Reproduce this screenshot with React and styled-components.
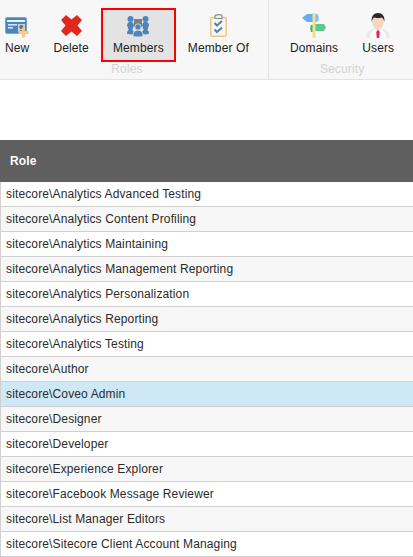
import React from "react";
import styled, { createGlobalStyle } from "styled-components";

const GlobalStyle = createGlobalStyle`
  html, body {
    margin: 0;
    padding: 0;
    overflow: hidden;
    background: #fff;
    font-family: "Liberation Sans", Arial, sans-serif;
    letter-spacing: 0.13px;
  }
`;

const Ribbon = styled.div`
  display: flex;
  height: 79px;
  margin-bottom: 60px;
  background: #f7f7f7;
  border-bottom: 1px solid #e3e3e3;
  overflow: hidden;
`;

const Chunk = styled.div`
  display: flex;
  flex: none;
  flex-direction: column;
  margin-left: ${(props) => props.$offset || 0}px;
  padding: 8px ${(props) => props.$right}px 0 ${(props) => props.$left}px;
  border-right: ${(props) => (props.$divider ? "1px solid #e3e3e3" : "none")};
`;

const Buttons = styled.div`
  display: flex;
`;

const RibbonButton = styled.div`
  display: flex;
  flex-direction: column;
  align-items: center;
  box-sizing: border-box;
  height: 54px;
  padding: ${(props) => (props.$active ? "3px 10px 0" : "5px 12px 0")};
  background: ${(props) => (props.$active ? "#e3e3e3" : "transparent")};
  border: ${(props) => (props.$active ? "2px solid #f00" : "none")};
  color: #222;
  font-size: 12px;
`;

const IconSlot = styled.div`
  display: flex;
  align-items: center;
  justify-content: center;
  height: 24px;
  margin-bottom: 4px;
`;

const ChunkLabel = styled.div`
  height: 14px;
  line-height: 14px;
  text-align: center;
  color: #d2d2d2;
  font-size: 12px;
`;

const Table = styled.table`
  width: 413px;
  border-collapse: separate;
  border-spacing: 0;
  table-layout: fixed;
  font-size: 12px;
`;

const Th = styled.th`
  box-sizing: border-box;
  height: 42px;
  padding: 0 0 0 10px;
  background: #5f5f5f;
  color: #fff;
  font-weight: bold;
  text-align: left;
`;

const Row = styled.tr`
  background: ${(props) =>
    props.$selected ? "#cfe8f5" : props.$odd ? "#f7f7f7" : "#fff"};
`;

const Td = styled.td`
  box-sizing: border-box;
  height: 25px;
  padding: 0 0 0 5px;
  border-left: 1px solid #d0d0d0;
  border-bottom: 1px solid #d0d0d0;
  color: #2b2b2b;
`;

const NewIcon = () => (
  <svg width="24" height="25" viewBox="0 -4 24 25">
    <rect x="0.5" y="0.5" width="21" height="16" rx="1.5" fill="#4a86bd" stroke="#7ba7cf" />
    <rect x="2" y="3" width="18" height="2" fill="#e8f1f8" />
    <rect x="3" y="7" width="9" height="1.6" fill="#d5e4f1" />
    <rect x="3" y="10" width="5" height="1.6" fill="#d5e4f1" />
    <rect x="13" y="7" width="7" height="8" fill="#c9d3da" />
    <circle cx="16.3" cy="10" r="2" fill="#6b6b6b" />
    <path d="M13.5 15c.4-2.2 5.2-2.2 5.6 0z" fill="#6b6b6b" />
    <path d="M17 10.5h3v3.5h3.5v3H20v3.5h-3V17h-3.5v-3H17z" fill="#f2c98b" />
  </svg>
);

const DeleteIcon = () => (
  <svg width="21" height="21" viewBox="0 0 21 21">
    <path d="M5 0l5.500 4.500L16 0l5 5-4.500 5.500L21 16l-5 5-5.500-4.500L5 21l-5-5 4.500-5.500L0 5z" fill="#e2281c" />
  </svg>
);

const MembersIcon = () => (
  <svg width="22" height="23" viewBox="0 -2 22 23" fill="#4f83bd">
    <rect x="7" y="3" width="8" height="8" fill="#7d7d7d" />
    <circle cx="3.500" cy="3" r="3" />
    <circle cx="18.500" cy="3" r="3" />
    <path d="M0 10c0-3 1.500-4.300 3.500-4.300S7 7 7 10c0 1.200-7 1.200-7 0zM15 10c0-3 1.500-4.300 3.500-4.300S22 7 22 10c0 1.200-7 1.200-7 0z" />
    <circle cx="3.500" cy="11.500" r="2.700" />
    <circle cx="18.500" cy="11.500" r="2.700" />
    <path d="M0 17.500c0-3 1.500-4 3.500-4S7 14.500 7 17.500c0 1.200-7 1.200-7 0zM15 17.500c0-3 1.500-4 3.500-4s3.500 1 3.500 4c0 1.200-7 1.200-7 0z" />
    <circle cx="11" cy="11" r="3.200" stroke="#e3e3e3" strokeWidth="0.800" />
    <path d="M6 20c0-4 2.200-5.800 5-5.800s5 1.800 5 5.800c0 1.300-10 1.300-10 0z" stroke="#e3e3e3" strokeWidth="0.800" />
  </svg>
);

const MemberOfIcon = () => (
  <svg width="17" height="23" viewBox="0 0 17 23">
    <rect x="0.800" y="3.500" width="15.400" height="18.700" rx="1" fill="#fbf6ea" stroke="#e6c88f" strokeWidth="1.500" />
    <path d="M5 4.500V2.500C5 1.300 6 .7 8.500.7s3.500.6 3.500 1.800v2z" fill="#f1f1f1" stroke="#8b8b8b" strokeWidth="1.200" />
    <path d="M4.500 9l2.500 2.500 5-4.500M4.500 15.500L7 18l5-4.500" fill="none" stroke="#4f83bd" strokeWidth="2" />
  </svg>
);

const DomainsIcon = () => (
  <svg width="24" height="25" viewBox="0 0 24 25">
    <path d="M0 5l5-4h6v8H5z" fill="#66aef0" />
    <path d="M13 1h2.500c1 1 1.500 3 1 7L13 9.500z" fill="#66aef0" opacity="0.800" />
    <path d="M9 12h3v7H9c-1-2-1-5 0-7z" fill="#3fb56f" />
    <path d="M13 11h9l2 3.500-2 3.500h-9z" fill="#58c98a" />
    <rect x="10.500" y="0" width="3" height="25" fill="#f3df8c" />
  </svg>
);

const UsersIcon = () => (
  <svg width="24" height="25" viewBox="0 0 24 25">
    <path d="M0 25c0-6 3-8 8-9.500h8c5 1.500 8 3.500 8 9.500z" fill="#eceae5" />
    <path d="M4 25c0-5 2-7 5-9l3 2 3-2c3 2 5 4 5 9z" fill="#fbfbf9" />
    <path d="M9 15.500h6l-3 3z" fill="#f5d6c0" />
    <path d="M11 17.500h2l.7 2-.5 5.500h-2.400l-.5-5.500z" fill="#e8205f" />
    <ellipse cx="12" cy="9" rx="5.800" ry="7" fill="#f8d5bd" />
    <path d="M5.800 9C5 3 8 0 12 0s7.200 3 6.300 9c-.5-2.500-1.300-4-2.800-4.500-2.500.8-5 .8-7 0C7 5 6.300 6.500 5.800 9z" fill="#2a2a2a" />
  </svg>
);

const roles = [
  "Analytics Advanced Testing",
  "Analytics Content Profiling",
  "Analytics Maintaining",
  "Analytics Management Reporting",
  "Analytics Personalization",
  "Analytics Reporting",
  "Analytics Testing",
  "Author",
  "Coveo Admin",
  "Designer",
  "Developer",
  "Experience Explorer",
  "Facebook Message Reviewer",
  "List Manager Editors",
  "Sitecore Client Account Managing",
];

const App = () => {
  return (
    <>
      <GlobalStyle />
      <Ribbon>
        <Chunk $offset={-7} $left={0} $right={7} $divider>
          <Buttons>
            <RibbonButton>
              <IconSlot><NewIcon /></IconSlot>
              New
            </RibbonButton>
            <RibbonButton>
              <IconSlot><DeleteIcon /></IconSlot>
              Delete
            </RibbonButton>
            <RibbonButton $active>
              <IconSlot><MembersIcon /></IconSlot>
              Members
            </RibbonButton>
            <RibbonButton>
              <IconSlot><MemberOfIcon /></IconSlot>
              Member Of
            </RibbonButton>
          </Buttons>
          <ChunkLabel>Roles</ChunkLabel>
        </Chunk>
        <Chunk $left={9} $right={9}>
          <Buttons>
            <RibbonButton>
              <IconSlot><DomainsIcon /></IconSlot>
              Domains
            </RibbonButton>
            <RibbonButton>
              <IconSlot><UsersIcon /></IconSlot>
              Users
            </RibbonButton>
          </Buttons>
          <ChunkLabel>Security</ChunkLabel>
        </Chunk>
      </Ribbon>
      <Table>
        <thead>
          <tr>
            <Th>Role</Th>
          </tr>
        </thead>
        <tbody>
          {roles.map((role, i) => (
            <Row key={role} $odd={i % 2 === 1} $selected={role === "Coveo Admin"}>
              <Td>sitecore\{role}</Td>
            </Row>
          ))}
        </tbody>
      </Table>
    </>
  );
};

export default App;
